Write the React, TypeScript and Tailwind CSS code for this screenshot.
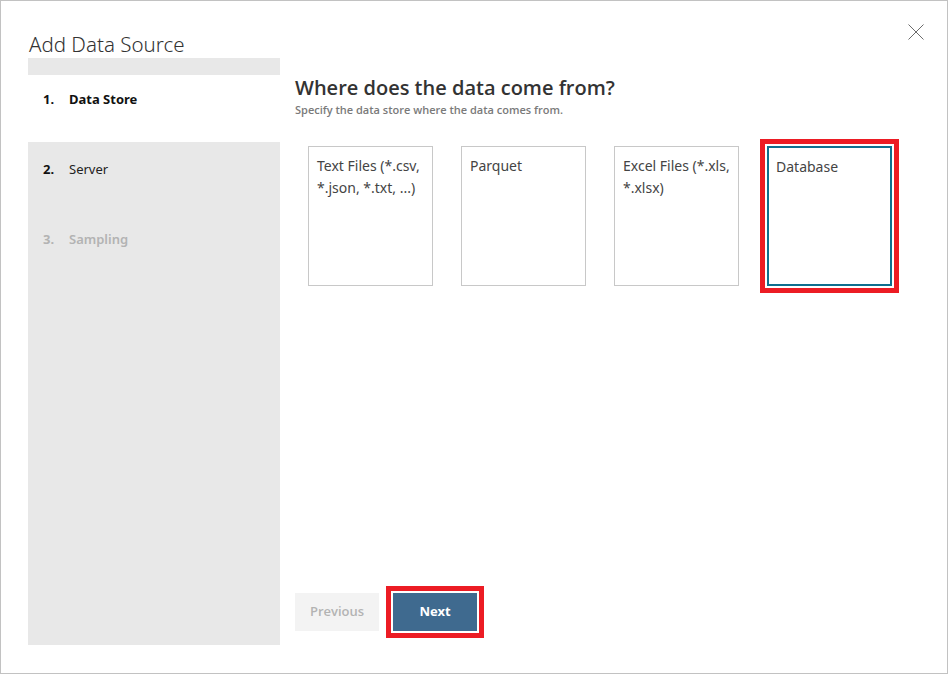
import React from 'react'

const font = { fontFamily: '"Noto Sans", "Open Sans", sans-serif' }

const steps = [
  { n: '1.', label: 'Data Store', state: 'active' },
  { n: '2.', label: 'Server', state: 'normal' },
  { n: '3.', label: 'Sampling', state: 'disabled' },
]

const stores = [
  { id: 'text', label: 'Text Files (*.csv, *.json, *.txt, ...)' },
  { id: 'parquet', label: 'Parquet' },
  { id: 'excel', label: 'Excel Files (*.xls, *.xlsx)' },
  { id: 'db', label: 'Database', selected: true },
]

export default function App() {
  return (
    <div className="w-[948px] h-[674px] bg-white border border-[#c2c2c2] relative flex flex-col" style={font}>
      {/* Close */}
      <button className="absolute top-[23px] right-[23px] w-4 h-4">
        <svg width="16" height="16" viewBox="0 0 16 16">
          <path d="M0.5 0.5 L15.5 15.5 M15.5 0.5 L0.5 15.5" stroke="#6b6b6b" strokeWidth="1" fill="none" />
        </svg>
      </button>

      {/* Header */}
      <div className="h-[57px] pl-[28px] pt-[30px]">
        <h1 className="text-[20.5px] leading-[26px] font-light text-[#333]">Add Data Source</h1>
      </div>

      <div className="flex h-[587px]">
        {/* Steps */}
        <div className="w-[252px] ml-[27px] bg-[#e8e8e8] flex flex-col">
          <div className="h-[17px]" />
          {steps.map((s) => (
            <div
              key={s.n}
              className={
                s.state === 'active'
                  ? 'h-[67px] pt-[14px] bg-white pl-[15px] flex'
                  : 'h-[70px] pt-[17px] pl-[15px] flex'
              }
            >
              <span
                className={`w-[26px] text-[13px] leading-[20px] font-bold ${
                  s.state === 'disabled' ? 'text-[#b3b3b3]' : 'text-[#111]'
                }`}
              >
                {s.n}
              </span>
              <span
                className={`text-[13px] leading-[20px] ${
                  s.state === 'active'
                    ? 'font-bold text-[#111]'
                    : s.state === 'disabled'
                    ? 'font-semibold text-[#b3b3b3]'
                    : 'text-[#222]'
                }`}
              >
                {s.label}
              </span>
            </div>
          ))}
        </div>

        {/* Content */}
        <div className="flex-1 flex flex-col pl-[15px] pt-[16px] pb-[14px]">
          <h2 className="text-[20px] leading-[28px] font-semibold text-[#333] font-['Open_Sans',sans-serif]">
            Where does the data come from?
          </h2>
          <p className="text-[11px] leading-[14px] font-semibold text-[#7a7a7a] mt-[1px] font-['Open_Sans',sans-serif]">
            Specify the data store where the data comes from.
          </p>

          <div className="flex gap-[28px] ml-[13px] mt-[29px]">
            {stores.map((s) => (
              <div
                key={s.id}
                className={
                  s.selected
                    ? 'w-[125px] h-[140px] border-2 border-[#0f6f8f] pt-[8px] pl-[7px] pr-[6px] outline-[5px] outline-solid outline-[#ec1c24] outline-offset-[2px]'
                    : 'w-[125px] h-[140px] border border-[#c8c8c8] pt-[8px] pl-[8px] pr-[6px]'
                }
              >
                <p className="text-[14px] leading-[22px] text-[#444]">{s.label}</p>
              </div>
            ))}
          </div>

          <div className="mt-auto flex gap-[14px]">
            <button className="w-[84px] h-[38px] bg-[#f3f3f3] text-[13px] font-semibold text-[#b3b3b3] font-['Open_Sans',sans-serif]">
              Previous
            </button>
            <button className="w-[84px] h-[38px] bg-[#3f6a8f] text-[13px] font-bold text-white outline-[5px] outline-solid outline-[#ec1c24] outline-offset-[2px]">
              Next
            </button>
          </div>
        </div>
      </div>
    </div>
  )
}
